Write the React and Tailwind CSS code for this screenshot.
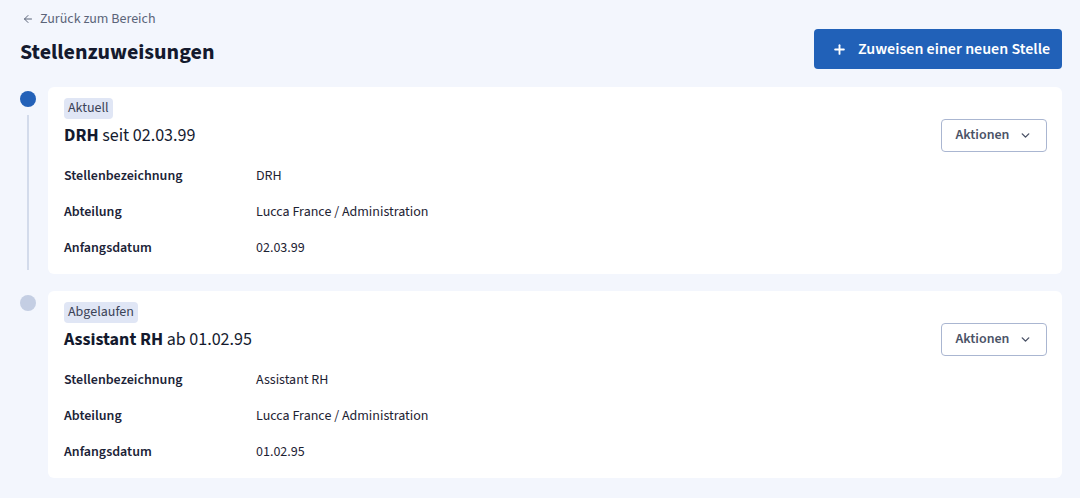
import { ArrowLeft, ChevronDown, Plus } from 'lucide-react';

const positions = [
  {
    status: 'Aktuell',
    title: 'DRH',
    since: 'seit 02.03.99',
    current: true,
    rows: [
      ['Stellenbezeichnung', 'DRH'],
      ['Abteilung', 'Lucca France / Administration'],
      ['Anfangsdatum', '02.03.99'],
    ],
  },
  {
    status: 'Abgelaufen',
    title: 'Assistant RH',
    since: 'ab 01.02.95',
    current: false,
    rows: [
      ['Stellenbezeichnung', 'Assistant RH'],
      ['Abteilung', 'Lucca France / Administration'],
      ['Anfangsdatum', '01.02.95'],
    ],
  },
];

function PositionCard({ item, last }) {
  return (
    <div className={`flex gap-3 ${last ? '' : 'pb-[17px]'}`}>
      <div className="flex w-4 flex-col items-center">
        <span
          className={`mt-1 h-4 w-4 shrink-0 rounded-full ${
            item.current ? 'bg-[#2361b8]' : 'bg-[#c4cee3]'
          }`}
        />
        {!last && <span className="mt-2 mb-1 w-[2px] flex-1 bg-[#d3dbeb]" />}
      </div>
      <div className="flex-1 rounded-md bg-white px-4 pt-[11px] pb-[8px]">
        <div className="w-fit rounded bg-[#e0e6f5] px-1 text-[14px] leading-[21px] text-[#3b4357]">
          {item.status}
        </div>
        <div className="flex h-[33px] items-center justify-between">
          <h2 className="text-[18px] leading-6 text-[#141a2e]">
            <span className="font-bold">{item.title}</span> {item.since}
          </h2>
          <button
            type="button"
            className="mr-[-1px] flex h-[33px] w-[106px] items-center justify-center gap-2.5 rounded border border-[#aab6d1] text-[14px] font-semibold text-[#4a5266]"
          >
            Aktionen
            <ChevronDown size={13} strokeWidth={2.6} />
          </button>
        </div>
        <div className="mt-1.5">
          {item.rows.map(([label, value]) => (
            <div key={label} className="grid h-9 grid-cols-[192px_1fr] items-center text-[14px]">
              <span className="font-semibold text-[#1b2337]">{label}</span>
              <span className="text-[#1d2233]">{value}</span>
            </div>
          ))}
        </div>
      </div>
    </div>
  );
}

export default function App() {
  return (
    <div
      className="min-h-[498px] bg-[#f3f6fd] pt-[9px] pr-[18px] pb-5 pl-5"
      style={{ fontFamily: '"Source Sans 3", "Source Sans Pro", Lato, sans-serif' }}
    >
      <div className="flex items-end justify-between">
        <div>
          <a href="#" className="flex items-center gap-1.5 pl-0.5 text-[14px] leading-5 text-[#5b6479]">
            <ArrowLeft size={12} strokeWidth={2} />
            Zurück zum Bereich
          </a>
          <h1 className="mt-[7px] text-[22px] font-bold leading-8 text-[#141a2e]">Stellenzuweisungen</h1>
        </div>
        <button
          type="button"
          className="mb-[-1px] flex h-10 w-[248px] items-center gap-[11px] rounded bg-[#2161b8] pl-[18px] text-[16px] font-semibold text-white"
        >
          <Plus size={15} strokeWidth={3} />
          Zuweisen einer neuen Stelle
        </button>
      </div>
      <div className="mt-[19px]">
        {positions.map((item, i) => (
          <PositionCard key={item.status} item={item} last={i === positions.length - 1} />
        ))}
      </div>
    </div>
  );
}
